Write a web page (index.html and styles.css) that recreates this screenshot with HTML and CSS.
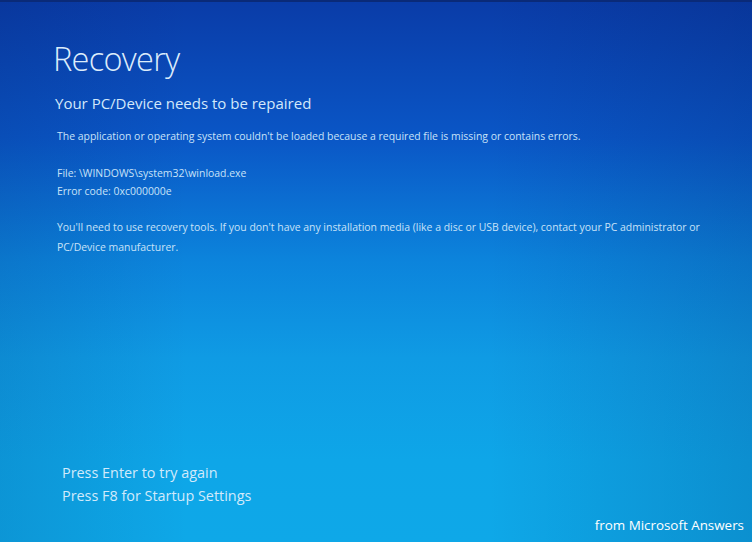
FILE: index.html
```html
<!DOCTYPE html>
<html>
<head>
<meta charset="utf-8">
<link rel="stylesheet" href="styles.css">
</head>
<body>
<div class="screen">
  <div class="content">
    <h1 class="title">Recovery</h1>
    <h2 class="subtitle">Your PC/Device needs to be repaired</h2>
    <p class="msg">The application or operating system couldn't be loaded because a required file is missing or contains errors.</p>
    <p class="msg info">File: \WINDOWS\system32\winload.exe<br>Error code: 0xc000000e</p>
    <p class="msg">You'll need to use recovery tools. If you don't have any installation media (like a disc or USB device), contact your PC administrator or PC/Device manufacturer.</p>
    <div class="actions">
      <div class="action">Press Enter to try again</div>
      <div class="action">Press F8 for Startup Settings</div>
    </div>
  </div>
  <div class="credit">from Microsoft Answers</div>
</div>
</body>
</html>
```
FILE: styles.css
```css
html, body {
  margin: 0;
  padding: 0;
}
.screen {
  position: relative;
  width: 752px;
  height: 542px;
  overflow: hidden;
  font-family: "Open Sans", "Noto Sans", sans-serif;
  color: #cfe7fa;
  border-top: 2px solid #0a2a78;
  box-sizing: border-box;
  background:
    linear-gradient(90deg, rgba(0, 20, 80, 0.12) 0%, rgba(0, 20, 80, 0) 25%, rgba(0, 20, 80, 0) 65%, rgba(0, 20, 80, 0.16) 100%),
    linear-gradient(180deg, #0a3ca8 0%, #0a56c6 25%, #0c84dc 48%, #0f9be4 66%, #0ea6e8 85%, #0ea8e8 100%);
}
.content {
  box-sizing: border-box;
  height: 100%;
  padding: 35px 40px 0 53px;
  display: flex;
  flex-direction: column;
}
.title {
  margin: 0;
  font-size: 32.5px;
  font-weight: 300;
  letter-spacing: -0.7px;
  line-height: 44px;
  color: #dcecfb;
}
.subtitle {
  margin: 11px 0 0 2px;
  font-size: 15px;
  font-weight: 400;
  line-height: 22px;
  color: #d3e8fa;
}
.msg {
  margin: 12px 0 0 4px;
  font-size: 10.45px;
  line-height: 20px;
  color: #c8e2f8;
}
.info {
  line-height: 18px;
}
.msg.info {
  margin-top: 18px;
}
.msg.info + .msg {
  margin-top: 17px;
}
.actions {
  margin: auto 0 0 9px;
  padding-bottom: 35px;
  display: flex;
  flex-direction: column;
}
.action {
  font-size: 14.4px;
  line-height: 23px;
  color: #d2eafb;
}
.credit {
  position: absolute;
  right: 8px;
  bottom: 8px;
  font-family: "Open Sans", "Noto Sans", sans-serif;
  font-size: 13.4px;
  color: #ffffff;
}
```
